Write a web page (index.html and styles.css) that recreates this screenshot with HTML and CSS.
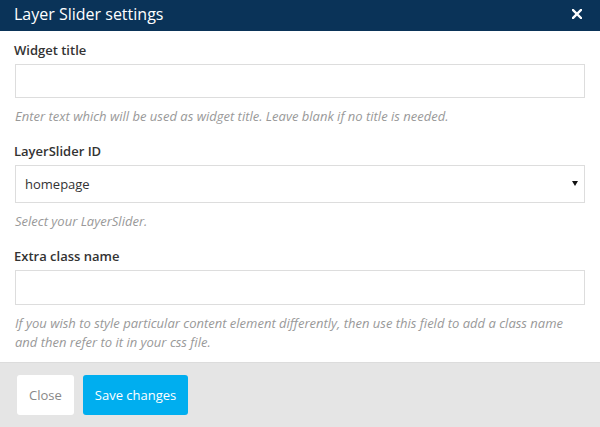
FILE: index.html
```html
<!DOCTYPE html>
<html>
<head>
<meta charset="utf-8">
<link rel="stylesheet" href="styles.css">
</head>
<body>
<div class="modal">
  <div class="modal-header">
    <span class="modal-title">Layer Slider settings</span>
    <svg class="modal-close" width="10" height="10" viewBox="0 0 10 10"><path d="M1 1 L9 9 M9 1 L1 9" stroke="#fff" stroke-width="2.4" stroke-linecap="square"/></svg>
  </div>
  <div class="modal-body">
    <div class="field">
      <label class="field-label">Widget title</label>
      <div class="text-input"></div>
      <p class="help">Enter text which will be used as widget title. Leave blank if no title is needed.</p>
    </div>
    <div class="field">
      <label class="field-label">LayerSlider ID</label>
      <div class="select-input"><span>homepage</span><svg class="caret" width="6" height="5" viewBox="0 0 6 5"><path d="M0 0 H6 L3 5 Z" fill="#111"/></svg></div>
      <p class="help">Select your LayerSlider.</p>
    </div>
    <div class="field">
      <label class="field-label">Extra class name</label>
      <div class="text-input tall"></div>
      <p class="help">If you wish to style particular content element differently, then use this field to add a class name and then refer to it in your css file.</p>
    </div>
  </div>
  <div class="modal-footer">
    <button class="btn btn-close">Close</button>
    <button class="btn btn-save">Save changes</button>
  </div>
</div>
</body>
</html>
```
FILE: styles.css
```css
html, body {
  margin: 0;
  padding: 0;
}
body {
  font-family: "Open Sans", "Liberation Sans", sans-serif;
  background: #fff;
  width: 600px;
  height: 427px;
  overflow: hidden;
}
.modal {
  display: flex;
  flex-direction: column;
  height: 427px;
}
.modal-header {
  flex-shrink: 0;
  background: #0a3358;
  color: #fff;
  height: 31px;
  display: flex;
  align-items: center;
  justify-content: space-between;
  padding: 0 18px 0 14px;
  box-sizing: border-box;
}
.modal-title {
  font-size: 16px;
  line-height: 20px;
  margin-top: -3px;
}
.modal-close {
  display: block;
  margin-top: -3px;
}
.modal-body {
  padding: 10px 15px 0 15px;
  flex: 1;
  min-height: 0;
}
.field-label {
  display: block;
  font-size: 13px;
  font-weight: 600;
  color: #333;
  line-height: 18px;
  margin-left: -1px;
  margin-bottom: 5px;
}
.text-input {
  height: 34px;
  border: 1px solid #ddd;
  box-sizing: border-box;
}
.text-input.tall {
  height: 35px;
}
.select-input {
  height: 38px;
  box-sizing: border-box;
  border: 1px solid #ddd;
  display: flex;
  align-items: center;
  justify-content: space-between;
  padding: 0 6px 0 9px;
  font-size: 13px;
  color: #333;
}
.caret {
  display: block;
  margin-top: -1px;
}
.help {
  margin: 9px 0 16px 0;
  font-size: 13px;
  font-style: italic;
  color: #999;
  line-height: 19px;
}
.modal-footer {
  flex-shrink: 0;
  background: #e5e5e5;
  border-top: 1px solid #dcdcdc;
  height: 65px;
  box-sizing: border-box;
  display: flex;
  align-items: center;
  gap: 9px;
  padding: 0 17px;
}
.btn {
  height: 40px;
  border: none;
  border-radius: 3px;
  font-family: "Open Sans", "Liberation Sans", sans-serif;
  font-size: 13px;
  padding: 0 12px;
}
.btn-close {
  background: #fff;
  color: #888;
}
.btn-save {
  background: #00aeef;
  color: #fff;
}
```
